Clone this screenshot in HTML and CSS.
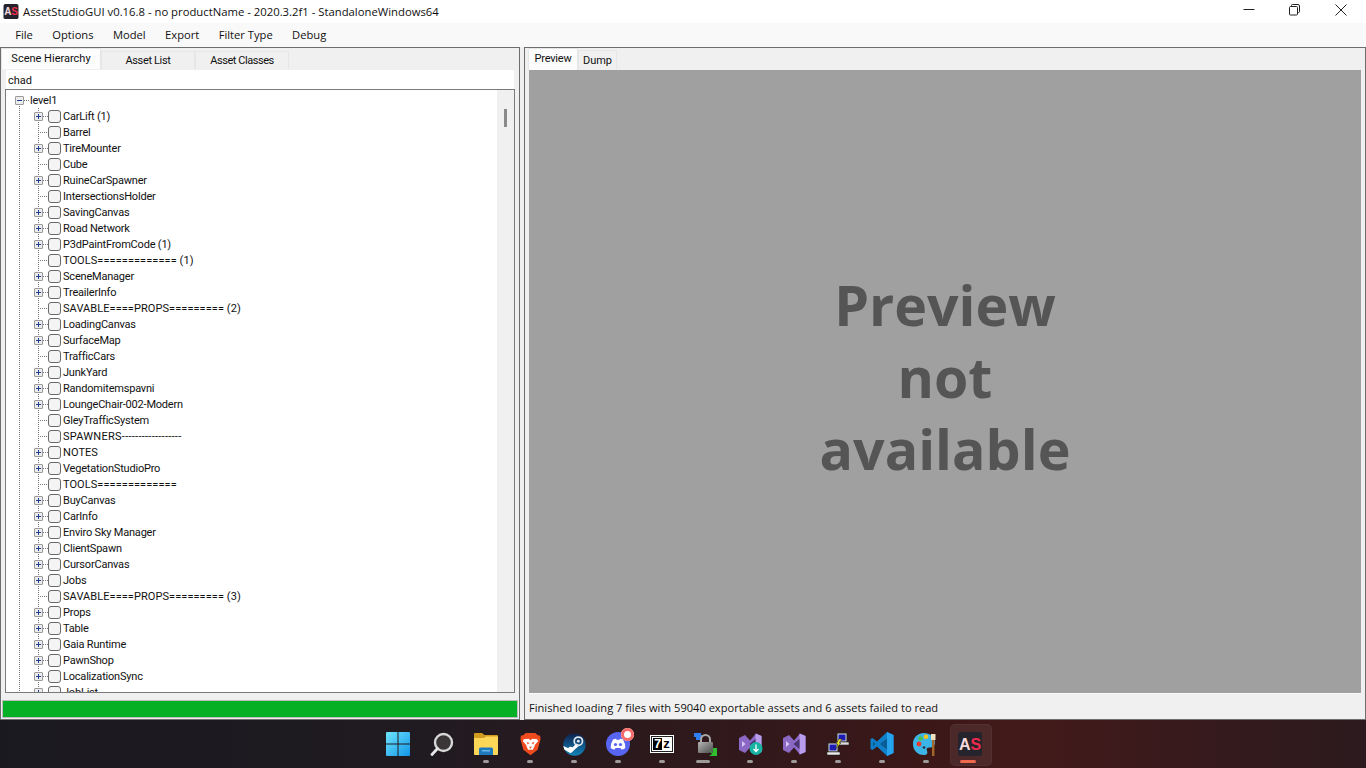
FILE: index.html
```html
<!DOCTYPE html>
<html lang="en">
<head>
<meta charset="utf-8">
<title>AssetStudioGUI</title>
<link rel="stylesheet" href="styles.css">
</head>
<body>
<svg width="0" height="0" class="defs">
  <defs>
    <g id="vs-mark">
      <path d="M7 3 L1 6 V18 L7 21 L12 15.500 L18 22.500 L23.500 20 V4 L18 1.500 L12 8.500 Z" fill="#8a68c4"/>
      <path d="M17.500 1.500 L23.500 4 V20 L17.500 22.500 Z" fill="#b99dec"/>
      <path d="M4 9 L7.500 12 L4 15 Z" fill="#d6c6f2"/>
      <path d="M11.500 12 L17.500 7 V17 Z" fill="#4a3570"/>
    </g>
  </defs>
</svg>
<div class="window">
  <header class="titlebar">
    <svg class="app-icon" width="16" height="15" viewBox="0 0 24 24"><rect width="24" height="24" rx="3" fill="#25232b"/><text x="1" y="18" class="logo-a">A</text><text x="12.500" y="18" class="logo-s">S</text></svg>
    <span class="title">AssetStudioGUI v0.16.8 - no productName - 2020.3.2f1 - StandaloneWindows64</span>
    <div class="controls">
      <span class="ctl"><svg width="12" height="12" viewBox="0 0 12 12"><path d="M.5 5.500 H11.500" stroke="#222" fill="none"/></svg></span>
      <span class="ctl"><svg width="12" height="12" viewBox="0 0 12 12"><path d="M.5 3.500 A1 1 0 0 1 1.500 2.500 H7.500 A1 1 0 0 1 8.500 3.500 V10 A1 1 0 0 1 7.500 11 H1.500 A1 1 0 0 1 .5 10 Z M2.500 2.500 V1.500 A1 1 0 0 1 3.500 .5 H9 A1.500 1.500 0 0 1 10.500 2 V7.500 A1 1 0 0 1 9.500 8.500 H8.500" stroke="#222" fill="none"/></svg></span>
      <span class="ctl"><svg width="12" height="12" viewBox="0 0 12 12"><path d="M.5 .5 L11.500 11.500 M11.500 .5 L.5 11.500" stroke="#222" fill="none"/></svg></span>
    </div>
  </header>
  <nav class="menubar">
    <span class="menu">File</span><span class="menu">Options</span><span class="menu">Model</span><span class="menu">Export</span><span class="menu">Filter Type</span><span class="menu">Debug</span>
  </nav>
  <main class="workspace">
    <section class="left-col">
      <div class="tabs">
        <span class="tab tab-active scene">Scene Hierarchy</span>
        <span class="tab list">Asset List</span>
        <span class="tab classes">Asset Classes</span>
      </div>
      <div class="tab-body">
        <div class="search">chad</div>
        <div class="tree-box">
          <div class="tree">
            <div class="root"><i class="exp minus"></i><i class="dash-root"></i><span>level1</span></div>
            <div class="row"><i class="exp"></i><i class="dash"></i><i class="check"></i><span>CarLift (1)</span></div>
            <div class="row"><i class="noexp"></i><i class="check"></i><span>Barrel</span></div>
            <div class="row"><i class="exp"></i><i class="dash"></i><i class="check"></i><span>TireMounter</span></div>
            <div class="row"><i class="noexp"></i><i class="check"></i><span>Cube</span></div>
            <div class="row"><i class="exp"></i><i class="dash"></i><i class="check"></i><span>RuineCarSpawner</span></div>
            <div class="row"><i class="noexp"></i><i class="check"></i><span>IntersectionsHolder</span></div>
            <div class="row"><i class="exp"></i><i class="dash"></i><i class="check"></i><span>SavingCanvas</span></div>
            <div class="row"><i class="exp"></i><i class="dash"></i><i class="check"></i><span>Road Network</span></div>
            <div class="row"><i class="exp"></i><i class="dash"></i><i class="check"></i><span>P3dPaintFromCode (1)</span></div>
            <div class="row"><i class="noexp"></i><i class="check"></i><span class="caps">TOOLS============= (1)</span></div>
            <div class="row"><i class="exp"></i><i class="dash"></i><i class="check"></i><span>SceneManager</span></div>
            <div class="row"><i class="exp"></i><i class="dash"></i><i class="check"></i><span>TreailerInfo</span></div>
            <div class="row"><i class="noexp"></i><i class="check"></i><span class="caps">SAVABLE====PROPS========= (2)</span></div>
            <div class="row"><i class="exp"></i><i class="dash"></i><i class="check"></i><span>LoadingCanvas</span></div>
            <div class="row"><i class="exp"></i><i class="dash"></i><i class="check"></i><span>SurfaceMap</span></div>
            <div class="row"><i class="noexp"></i><i class="check"></i><span>TrafficCars</span></div>
            <div class="row"><i class="exp"></i><i class="dash"></i><i class="check"></i><span>JunkYard</span></div>
            <div class="row"><i class="exp"></i><i class="dash"></i><i class="check"></i><span>Randomitemspavni</span></div>
            <div class="row"><i class="exp"></i><i class="dash"></i><i class="check"></i><span>LoungeChair-002-Modern</span></div>
            <div class="row"><i class="noexp"></i><i class="check"></i><span>GleyTrafficSystem</span></div>
            <div class="row"><i class="noexp"></i><i class="check"></i><span class="caps hyphens">SPAWNERS------------------</span></div>
            <div class="row"><i class="exp"></i><i class="dash"></i><i class="check"></i><span class="caps">NOTES</span></div>
            <div class="row"><i class="exp"></i><i class="dash"></i><i class="check"></i><span>VegetationStudioPro</span></div>
            <div class="row"><i class="noexp"></i><i class="check"></i><span class="caps">TOOLS=============</span></div>
            <div class="row"><i class="exp"></i><i class="dash"></i><i class="check"></i><span>BuyCanvas</span></div>
            <div class="row"><i class="exp"></i><i class="dash"></i><i class="check"></i><span>CarInfo</span></div>
            <div class="row"><i class="exp"></i><i class="dash"></i><i class="check"></i><span>Enviro Sky Manager</span></div>
            <div class="row"><i class="exp"></i><i class="dash"></i><i class="check"></i><span>ClientSpawn</span></div>
            <div class="row"><i class="exp"></i><i class="dash"></i><i class="check"></i><span>CursorCanvas</span></div>
            <div class="row"><i class="exp"></i><i class="dash"></i><i class="check"></i><span>Jobs</span></div>
            <div class="row"><i class="noexp"></i><i class="check"></i><span class="caps">SAVABLE====PROPS========= (3)</span></div>
            <div class="row"><i class="exp"></i><i class="dash"></i><i class="check"></i><span>Props</span></div>
            <div class="row"><i class="exp"></i><i class="dash"></i><i class="check"></i><span>Table</span></div>
            <div class="row"><i class="exp"></i><i class="dash"></i><i class="check"></i><span>Gaia Runtime</span></div>
            <div class="row"><i class="exp"></i><i class="dash"></i><i class="check"></i><span>PawnShop</span></div>
            <div class="row"><i class="exp"></i><i class="dash"></i><i class="check"></i><span>LocalizationSync</span></div>
            <div class="row"><i class="exp"></i><i class="dash"></i><i class="check"></i><span>JobList</span></div>
          </div>
          <div class="scrollbar"><div class="thumb"></div></div>
        </div>
      </div>
      <div class="progress-wrap"><div class="progress"></div></div>
    </section>
    <div class="gutter"></div>
    <section class="right-col">
      <div class="tabs small-tabs">
        <span class="tab tab-active preview-tab">Preview</span>
        <span class="tab dump-tab">Dump</span>
      </div>
      <div class="preview-body">
        <div class="preview"><p>Preview<br>not<br>available</p></div>
      </div>
      <div class="status">Finished loading 7 files with 59040 exportable assets and 6 assets failed to read</div>
    </section>
  </main>
</div>
<footer class="taskbar">
  <div class="task"><svg width="24" height="24" viewBox="0 0 24 24"><defs><linearGradient id="w" x1="0" y1="0" x2="1" y2="1"><stop offset="0" stop-color="#6ee4fb"/><stop offset="1" stop-color="#1296e8"/></linearGradient></defs><path d="M0 1 a1 1 0 0 1 1 -1 H11.500 V11.500 H0 Z M12.500 0 H23 a1 1 0 0 1 1 1 V11.500 H12.500 Z M0 12.500 H11.500 V24 H1 a1 1 0 0 1 -1 -1 Z M12.500 12.500 H24 V23 a1 1 0 0 1 -1 1 H12.500 Z" fill="url(#w)"/></svg></div>
  <div class="task"><svg width="24" height="24" viewBox="0 0 24 24"><circle cx="13.500" cy="10.500" r="8.500" fill="#3a3638" stroke="#d8d8d8" stroke-width="2.400"/><path d="M7.500 16.500 L2 22.500" stroke="#e6e6e6" stroke-width="2.800" stroke-linecap="round"/></svg><b class="dot none"></b></div>
  <div class="task"><svg width="24" height="24" viewBox="0 0 24 24"><path d="M0 2 a1 1 0 0 1 1 -1 H8 L10.500 3 H23 a1 1 0 0 1 1 1 V8 H0 Z" fill="#d39b1e"/><path d="M0 6 H10 L12 4.500 H24 V22 a1 1 0 0 1 -1 1 H1 a1 1 0 0 1 -1 -1 Z" fill="#fbd657"/><path d="M5 23 V17 a1.500 1.500 0 0 1 1.500 -1.500 H17.500 a1.500 1.500 0 0 1 1.500 1.500 V23 Z" fill="#1f79bd"/><path d="M8 18 H16 V19.500 H8 Z" fill="#67b6ea"/></svg><b class="dot"></b></div>
  <div class="task"><svg width="21" height="24" viewBox="0 0 22 24"><path d="M6 .5 H16 L19 3 L21 3 L21.500 7 L18.500 18 L11 23.800 L3.500 18 L.5 7 L1 3 L3 3 Z" fill="#f04a1f"/><path d="M4 7 L9 6.500 L11 8 L13 6.500 L18 7 L19 9 L15.500 13 L15 15 L13.500 18 H8.500 L7 15 L6.500 13 L3 9 Z" fill="#fff"/><path d="M7 10 L10 11 L8 12.500 Z M15 10 L12 11 L14 12.500 Z M9.500 15 H12.500 L11 17 Z" fill="#f04a1f"/></svg><b class="dot"></b></div>
  <div class="task"><svg width="23" height="23" viewBox="0 0 24 24"><defs><linearGradient id="s" x1="0.500" y1="0" x2="0.500" y2="1"><stop offset="0" stop-color="#11204a"/><stop offset=".6" stop-color="#0f5b8f"/><stop offset="1" stop-color="#1586b8"/></linearGradient></defs><circle cx="12" cy="12" r="11.700" fill="url(#s)"/><path d="M.3 13.500 L8 17 L14 11 L17 13 L12 17.500 L8 21 L1.500 17.500 Z" fill="#fff"/><circle cx="16" cy="8.500" r="4.300" fill="none" stroke="#dfe8ee" stroke-width="1.800"/><circle cx="16" cy="8.500" r="1.500" fill="#dfe8ee"/><circle cx="8" cy="17" r="2.700" fill="#fff"/></svg><b class="dot"></b></div>
  <div class="task"><div class="discord"><svg width="24" height="24" viewBox="0 0 24 24"><circle cx="12" cy="12" r="12" fill="#5865f2"/><path d="M7 7.500 Q9.500 6.500 10 6.800 L10.400 7.700 H13.600 L14 6.800 Q15 6.600 17 7.500 Q19.500 11.500 19.300 16 Q17.500 17.500 15.300 17.500 L14.500 16 H9.500 L8.700 17.500 Q6.500 17.500 4.700 16 Q4.500 11.500 7 7.500 Z" fill="#fff"/><circle cx="9.500" cy="12.500" r="1.600" fill="#5865f2"/><circle cx="14.500" cy="12.500" r="1.600" fill="#5865f2"/></svg><i class="badge"></i></div><b class="dot"></b></div>
  <div class="task"><div class="sevenz"><span class="seven">7</span><span class="zee">z</span></div><b class="dot"></b></div>
  <div class="task"><svg width="24" height="24" viewBox="0 0 24 24"><defs><linearGradient id="l" x1="0" y1="0" x2="1" y2="1"><stop offset="0" stop-color="#b5b5b5"/><stop offset="1" stop-color="#4a4a4a"/></linearGradient></defs><path d="M0 1 H7 V3 H10 L6 8 L2 8 V5 H0 Z" fill="#2f7ef0"/><path d="M7 11 V7.500 a4.500 4.500 0 0 1 9 0 V11" fill="none" stroke="#a8a8a8" stroke-width="2"/><rect x="4" y="10" width="15" height="11" rx="1" fill="url(#l)"/><path d="M15 17 L19 21 V16 H23 V24 H15 L18 22 Z" fill="#2fbf2f"/></svg><b class="dot wide"></b></div>
  <div class="task"><svg width="25" height="24" viewBox="0 0 25 24"><use href="#vs-mark"/><circle cx="18" cy="16.500" r="6.500" fill="#17b3a3"/><path d="M18 12.500 V19.500 M15.500 17 L18 19.500 L20.500 17" stroke="#fff" stroke-width="1.300" fill="none"/></svg><b class="dot"></b></div>
  <div class="task"><svg width="25" height="24" viewBox="0 0 25 24"><use href="#vs-mark"/></svg><b class="dot"></b></div>
  <div class="task"><svg width="24" height="24" viewBox="0 0 24 24"><rect x="11" y="1" width="10" height="9" fill="#ddd" stroke="#222"/><rect x="12.500" y="2.500" width="7" height="6" fill="#1b1bb5"/><rect x="10" y="10" width="13" height="3" fill="#ddd" stroke="#222" stroke-width=".6"/><rect x="2" y="11" width="10" height="9" fill="#ddd" stroke="#222"/><rect x="3.500" y="12.500" width="7" height="6" fill="#1b1bb5"/><rect x="1" y="20" width="13" height="3" fill="#eee" stroke="#222" stroke-width=".6"/><path d="M13 7 L10 12 H12 L9.500 17 L15 11 H13 L16 7 Z" fill="#f3e52a" stroke="#222" stroke-width=".5"/></svg><b class="dot"></b></div>
  <div class="task"><svg width="24" height="24" viewBox="0 0 24 24"><path d="M17 0 L23.500 3 V21 L17 24 L7 14.500 L2.500 18 L.5 17 V7 L2.500 6 L7 9.500 Z" fill="#0f7fc9"/><path d="M17 0 L23.500 3 V21 L17 24 Z" fill="#27a4ee"/><path d="M17 6.500 L10 12 L17 17.500 Z" fill="#0b5c94"/><path d="M3 9.500 L5.500 12 L3 14.500 Z" fill="#0b5c94"/></svg><b class="dot"></b></div>
  <div class="task"><svg width="26" height="25" viewBox="0 0 26 25"><path d="M11 1 C4 1 0 6 0 12 C0 18 4 23 11 23 C14 23 15 21 14 19 C13 17 14 15.500 16 15.500 C20 15.500 22 14 22 10 C22 5 17 1 11 1 Z" fill="#3cb4e8"/><circle cx="6" cy="12" r="2.400" fill="#e8382c"/><circle cx="7.500" cy="6.500" r="2.300" fill="#4bc04a"/><circle cx="13" cy="4.800" r="2.300" fill="#f4c31c"/><path d="M9.500 15.500 H12.500 M11 14 V17" stroke="#234" stroke-width="1.200"/><rect x="19" y="8" width="2.400" height="16" fill="#a6672a"/><path d="M18 2 H22.500 V8 H18 Z" fill="#f0e0c0"/></svg><b class="dot"></b></div>
  <div class="task task-active"><svg width="24" height="24" viewBox="0 0 24 24"><rect width="24" height="24" rx="3" fill="#25232b"/><text x="1" y="18" class="logo-a">A</text><text x="12.500" y="18" class="logo-s">S</text></svg><b class="dot accent"></b></div>
</footer>
</body>
</html>
```
FILE: styles.css
```css
* { box-sizing: border-box; }
html, body { margin: 0; padding: 0; width: 1366px; height: 768px; overflow: hidden; }
body { font-family: Roboto, "Liberation Sans", sans-serif; font-size: 11px; color: #111; background: #f0f0f0; display: flex; flex-direction: column; }
.defs { position: absolute; }
.window { height: 720px; display: flex; flex-direction: column; }
.titlebar { height: 23px; background: #fff; display: flex; align-items: center; padding-left: 3px; }
.title { margin-left: 4px; font-family: "Open Sans", sans-serif; font-size: 11.3px; white-space: nowrap; }
.app-icon { flex: none; }
.logo-a { font: 700 16px "Liberation Sans", sans-serif; fill: #f5d8dc; }
.logo-s { font: 700 16px "Liberation Sans", sans-serif; fill: #ee2a4d; }
.controls { margin-left: auto; display: flex; height: 23px; padding-right: 2px; }
.ctl { width: 46px; display: flex; align-items: flex-start; justify-content: center; padding-top: 4px; }
.menubar { height: 24px; background: #f9f9f9; display: flex; align-items: center; padding: 0 0 2px 5.500px; font-family: "Open Sans", sans-serif; font-size: 11.2px; }
.menu { padding: 0 9.700px; white-space: nowrap; }
.workspace { flex: 1; min-height: 0; display: flex; background: #f0f0f0; }
.left-col { width: 520px; display: flex; flex-direction: column; border: 1px solid #6d6d6d; }
.gutter { width: 4px; }
.right-col { flex: 1; display: flex; flex-direction: column; border: 1px solid #6d6d6d; }
.tabs { height: 21px; display: flex; align-items: flex-end; flex: none; }
.tab { height: 18px; display: flex; align-items: center; justify-content: center; background: #f0f0f0; border: 1px solid #e6e6e6; border-bottom: 0; padding-bottom: 1px; }
.tab-active { height: 21px; background: #fcfcfc; padding-bottom: 2px; }
.scene { width: 100px; }
.list { width: 94px; letter-spacing: -.35px; }
.classes { width: 94px; letter-spacing: -.45px; }
.tab-body { margin: 0 4px; display: flex; flex-direction: column; flex: none; }
.search { height: 19px; margin: 1px 1px 0; background: #fff; padding: 1px 0 0 2px; display: flex; align-items: center; flex: none; }
.tree-box { height: 604px; flex: none; border: 1px solid #7a7a7a; background: #fff; display: flex; overflow: hidden; }
.tree { flex: 1; padding-top: 2px; overflow: hidden; background-image: repeating-linear-gradient(to bottom, #777 0 1px, transparent 1px 2px), repeating-linear-gradient(to bottom, #777 0 1px, transparent 1px 2px); background-size: 1px 100%; background-position: 13px 16px, 32px 18px; background-repeat: no-repeat; }
.root, .row { height: 16px; display: flex; align-items: center; white-space: nowrap; letter-spacing: -.2px; }
.caps { letter-spacing: .07px; }
.hyphens { letter-spacing: .27px; }
.root { padding-left: 9px; }
.row { padding-left: 28px; }
.exp { flex: none; width: 9px; height: 9px; border: 1px solid #9a9a9a; border-radius: 1px; background: linear-gradient(#1f3f8f, #1f3f8f) center / 5px 1px no-repeat, linear-gradient(#1f3f8f, #1f3f8f) center / 1px 5px no-repeat, #ececec; }
.minus { background: linear-gradient(#1f3f8f, #1f3f8f) center / 5px 1px no-repeat, #ececec; }
.dash { flex: none; width: 5px; height: 1px; background: repeating-linear-gradient(to right, #777 0 1px, transparent 1px 2px); }
.dash-root { flex: none; width: 6px; height: 1px; background: repeating-linear-gradient(to right, #777 0 1px, transparent 1px 2px); }
.noexp { flex: none; width: 14px; height: 1px; background: repeating-linear-gradient(to right, #777 0 1px, transparent 1px 2px) 4px 0 / 10px 1px no-repeat; }
.check { flex: none; width: 13px; height: 13px; border: 1px solid #6a6a6a; border-radius: 3px; background: #f4f4f4; margin-right: 2px; }
.scrollbar { width: 17px; flex: none; background: #f0f0f0; padding-top: 19px; display: flex; justify-content: center; }
.thumb { width: 3px; height: 18px; background: #8a8a8a; }
.progress-wrap { height: 19px; padding: 0 1px 1px; margin-top: auto; flex: none; }
.progress { height: 100%; background: #06b025; border: 1px solid #bcbcbc; }
.small-tabs { height: 22px; padding-left: 3px; }
.small-tabs .tab { height: 20px; }
.small-tabs .tab-active { height: 22px; padding-bottom: 3px; letter-spacing: -.2px; }
.preview-tab { width: 50px; }
.dump-tab { width: 39px; }
.preview-body { flex: 1; min-height: 0; padding: 0 4px; display: flex; }
.preview { flex: 1; background: #a0a0a0; display: flex; align-items: center; justify-content: center; box-shadow: 0 1px 0 #fafafa; }
.preview p { margin: 0 0 10px; font-family: "Open Sans", sans-serif; font-size: 55.500px; line-height: 72px; font-weight: 700; color: #555; text-align: center; }
.status { height: 26px; flex: none; display: flex; align-items: center; padding: 2px 0 0 4px; font-family: "Open Sans", sans-serif; font-size: 11.100px; }
.taskbar { height: 48px; flex: none; display: flex; justify-content: center; background: linear-gradient(90deg, #1a191f 0%, #1f1b21 30%, #3a1718 66%, #431a1a 75%, #2b1a1e 100%); padding-left: 2px; }
.task { width: 44px; height: 48px; position: relative; display: flex; align-items: center; justify-content: center; }
.dot { position: absolute; left: 19px; top: 40px; width: 6px; height: 3px; border-radius: 2px; background: #9f9a9a; }
.dot.none { display: none; }
.dot.wide { left: 12px; width: 14px; }
.dot.accent { left: 12px; width: 16px; background: #f0694f; }
.task-active::before { content: ""; position: absolute; left: 2px; top: 4px; width: 40px; height: 40px; border-radius: 5px; background: rgba(255,255,255,.07); border: 1px solid rgba(255,255,255,.04); }
.task-active svg { position: relative; }
.discord { position: relative; width: 24px; height: 24px; }
.badge { position: absolute; right: -4px; top: -4px; width: 13px; height: 13px; border-radius: 50%; background: #f46a6a; box-shadow: inset 0 0 0 3px #f46a6a, inset 0 0 0 7px #fff; }
.sevenz { width: 24px; height: 18px; background: #fff; border: 1px solid #fff; outline: 1px solid #222; outline-offset: -2px; display: flex; align-items: stretch; padding: 2px; font: 700 13px/12px "Liberation Sans", sans-serif; }
.seven { flex: 1; background: #000; color: #fff; text-align: center; }
.zee { flex: 1; background: #fff; color: #000; text-align: center; }
```
